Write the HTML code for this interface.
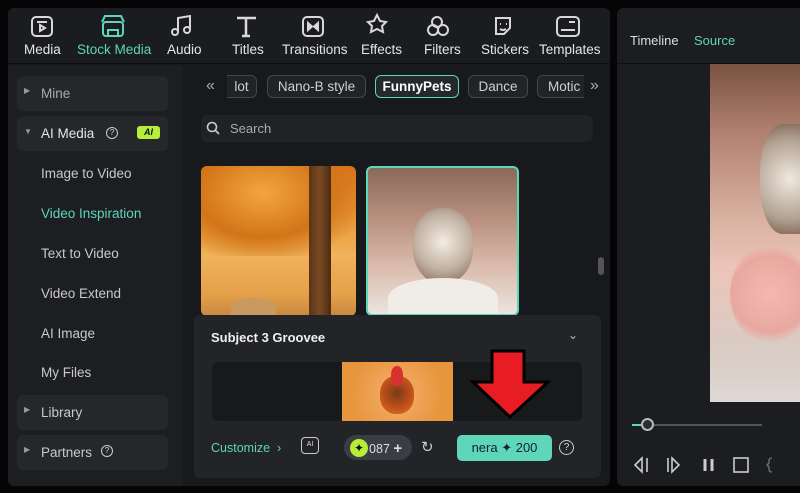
<!DOCTYPE html><html><head><style>
*{margin:0;padding:0;box-sizing:border-box}
body{width:800px;height:493px;background:#050505;font-family:"Liberation Sans",sans-serif;position:relative;overflow:hidden;color:#d8d8d8}
.a{position:absolute}
.tab{position:absolute;top:42px;font-size:13.5px;color:#e6e6e6;text-align:center}
.side{font-size:13.5px;color:#c9c9c9}
.item{position:absolute;left:17px;width:151px;height:35px;background:#25272b;border-radius:6px}
.chip{position:absolute;top:75px;height:23px;border:1px solid #44474c;border-radius:6px;font-size:13.5px;color:#cfcfcf;line-height:21px;text-align:center;background:#212326}
</style></head><body>
<div class="a" style="left:8px;top:8px;width:602px;height:478px;border-radius:6px;background:#17191c"></div>
<div class="a" style="left:8px;top:8px;width:602px;height:56px;background:#1a1c1f;border-bottom:1px solid #0e0f10;border-radius:6px 6px 0 0"></div>
<svg class="a" style="left:0;top:0" width="610" height="64" fill="none" stroke="#d8d8d8" stroke-width="2">
<rect x="32" y="17" width="20" height="19" rx="4"/><path d="M37 22h10M40 25l5 3-5 3z"/>
<g stroke="#5ed6b8"><rect x="103" y="22" width="20" height="14" rx="3"/><path d="M102 22l3-6h16l3 6M108 36v-6h10v6"/></g>
<path d="M178 31V18l12-2v13" /><circle cx="175" cy="32" r="3"/><circle cx="187" cy="30" r="3"/>
<path d="M237 18h19M246 18v18M242 36h8" stroke-width="2.5"/>
<rect x="303" y="17" width="20" height="19" rx="4"/><path d="M308 23l4 3.5-4 3.5zM318 23l-4 3.5 4 3.5z" fill="#d8d8d8"/>
<path d="M377 15l3 6 6 1-4 4 1 6-6-3-6 3 1-6-4-4 6-1z"/>
<circle cx="437" cy="22" r="5"/><circle cx="433" cy="30" r="5"/><circle cx="443" cy="30" r="5"/>
<path d="M496 18h14v10l-6 6h-8z M500 24h1 M506 24h1 M500 29q3 2 6 0"/>
<rect x="557" y="17" width="22" height="19" rx="4"/><path d="M561 30h14M569 22h6"/>
</svg>
<div class="tab" style="left:24px">Media</div>
<div class="tab" style="left:77px;color:#5ed6b8">Stock Media</div>
<div class="tab" style="left:167px">Audio</div>
<div class="tab" style="left:232px">Titles</div>
<div class="tab" style="left:282px">Transitions</div>
<div class="tab" style="left:361px">Effects</div>
<div class="tab" style="left:424px">Filters</div>
<div class="tab" style="left:481px">Stickers</div>
<div class="tab" style="left:539px">Templates</div>
<div class="a" style="left:8px;top:65px;width:175px;height:421px;background:#1c1e21;border-radius:0 0 0 6px"></div>
<div class="item" style="top:76px"></div>
<div class="item" style="top:116px"></div>
<div class="item" style="top:395px"></div>
<div class="item" style="top:435px"></div>
<div class="a side" style="left:24px;top:86px;font-size:8px;color:#999">▶</div>
<div class="a side" style="left:41px;top:86px;color:#aaa">Mine</div>
<div class="a side" style="left:24px;top:127px;font-size:8px;color:#999">▼</div>
<div class="a side" style="left:41px;top:126px;color:#e6e6e6">AI Media</div>
<div class="a" style="left:106px;top:127px;width:12px;height:12px;border:1.3px solid #ccc;border-radius:50%;font-size:8px;text-align:center;line-height:10px">?</div>
<div class="a" style="left:137px;top:126px;width:23px;height:13px;background:#b6ee3a;border-radius:3px;color:#111;font-size:9px;font-weight:bold;font-style:italic;text-align:center;line-height:13px">AI</div>
<div class="a side" style="left:41px;top:166px">Image to Video</div>
<div class="a side" style="left:41px;top:206px;color:#5ed6b8">Video Inspiration</div>
<div class="a side" style="left:41px;top:246px">Text to Video</div>
<div class="a side" style="left:41px;top:286px">Video Extend</div>
<div class="a side" style="left:41px;top:326px">AI Image</div>
<div class="a side" style="left:41px;top:365px">My Files</div>
<div class="a side" style="left:24px;top:405px;font-size:8px;color:#999">▶</div>
<div class="a side" style="left:41px;top:405px">Library</div>
<div class="a side" style="left:24px;top:445px;font-size:8px;color:#999">▶</div>
<div class="a side" style="left:41px;top:445px">Partners</div>
<div class="a" style="left:101px;top:445px;width:12px;height:12px;border:1.3px solid #ccc;border-radius:50%;font-size:8px;text-align:center;line-height:10px">?</div>
<div class="a" style="left:206px;top:77px;font-size:16px;color:#aaa">«</div>
<div class="chip" style="left:227px;width:30px;border-left:none;border-radius:0 6px 6px 0">lot</div>
<div class="chip" style="left:267px;width:99px">Nano-B style</div>
<div class="chip" style="left:375px;width:84px;border:1.5px solid #5ed6b8;color:#fff;font-weight:bold;background:#26292c">FunnyPets</div>
<div class="chip" style="left:468px;width:60px">Dance</div>
<div class="chip" style="left:537px;width:47px;border-right:none;border-radius:6px 0 0 6px;text-align:left;padding-left:10px">Motic</div>
<div class="a" style="left:590px;top:77px;font-size:16px;color:#aaa">»</div>
<div class="a" style="left:201px;top:115px;width:392px;height:27px;background:#202225;border-radius:6px"></div>
<svg class="a" style="left:206px;top:121px" width="14" height="14" fill="none" stroke="#ccc" stroke-width="1.6"><circle cx="6" cy="6" r="4.5"/><path d="M9.5 9.5l3.5 3.5"/></svg>
<div class="a" style="left:230px;top:121px;font-size:13px;color:#aaa">Search</div>
<div class="a" style="left:201px;top:166px;width:155px;height:150px;border-radius:6px;overflow:hidden;background:linear-gradient(180deg,#d8731a 0%,#e89a3a 35%,#f0b25a 60%,#e6a04a 85%,#c78a40 100%)">
<div class="a" style="left:0;top:0;width:155px;height:90px;background:radial-gradient(ellipse at 40% 30%,#f2a540 0%,#d27518 50%,transparent 80%)"></div>
<div class="a" style="left:108px;top:0;width:22px;height:150px;background:linear-gradient(90deg,#5a3418,#7a4a22,#4a2a14)"></div>
<div class="a" style="left:30px;top:132px;width:45px;height:20px;border-radius:50% 50% 0 0;background:#c89a60"></div>
</div>
<div class="a" style="left:366px;top:166px;width:153px;height:150px;border-radius:6px;border:2px solid #5ed6b8;overflow:hidden;background:linear-gradient(180deg,#8a6a5a 0%,#b89080 35%,#d8b8a8 65%,#ece4de 100%)">
<div class="a" style="left:45px;top:40px;width:60px;height:75px;border-radius:45%;background:radial-gradient(circle at 50% 45%,#f4ece4,#c0b0a0 55%,#7a5a4a)"></div>
<div class="a" style="left:20px;top:110px;width:110px;height:40px;border-radius:50% 50% 0 0;background:#f0ece8"></div>
</div>
<div class="a" style="left:598px;top:257px;width:6px;height:18px;background:#555;border-radius:3px"></div>
<div class="a" style="left:194px;top:315px;width:407px;height:163px;background:#222427;border-radius:6px"></div>
<div class="a" style="left:211px;top:330px;font-size:13px;font-weight:bold;color:#f0f0f0">Subject 3 Groovee</div>
<div class="a" style="left:568px;top:328px;font-size:12px;color:#bbb">⌄</div>
<div class="a" style="left:212px;top:362px;width:370px;height:59px;background:#17191b;border-radius:6px"></div>
<div class="a" style="left:342px;top:362px;width:111px;height:59px;background:radial-gradient(circle at 50% 55%,#f7b070,#e8963e 70%)"></div>
<div class="a" style="left:380px;top:376px;width:34px;height:38px;border-radius:45%;background:radial-gradient(circle at 50% 45%,#7a3a1a,#c0501a 55%,#e07a2a)"></div>
<div class="a" style="left:391px;top:366px;width:12px;height:20px;border-radius:45%;background:#d83030"></div>
<div class="a" style="left:211px;top:441px;font-size:12.5px;color:#5ed6b8">Customize &nbsp;›</div>
<div class="a" style="left:301px;top:437px;width:18px;height:17px;border:1.5px solid #ccc;border-radius:4px;font-size:7px;text-align:center;line-height:13px;color:#ddd">AI</div>
<div class="a" style="left:344px;top:435px;width:68px;height:25px;background:#3a3e44;border-radius:13px"></div>
<div class="a" style="left:350px;top:439px;width:18px;height:18px;background:#b6ee3a;border-radius:50%;color:#111;font-size:12px;text-align:center;line-height:18px">✦</div>
<div class="a" style="left:369px;top:440px;font-size:12.5px;color:#ddd">087 <b style="font-size:15px">+</b></div>
<div class="a" style="left:421px;top:438px;font-size:15px;color:#ccc">↻</div>
<div class="a" style="left:457px;top:435px;width:95px;height:26px;background:#5ed6b8;border-radius:5px;color:#123;font-size:13px;text-align:center;line-height:26px">nera ✦ 200</div>
<div class="a" style="left:559px;top:440px;width:15px;height:15px;border:1.5px solid #ccc;border-radius:50%;font-size:10px;text-align:center;line-height:13px">?</div>
<svg class="a" style="left:470px;top:348px" width="82" height="72"><path d="M22 3h32v31h24L40 69 3 34h19z" fill="#e81c23" stroke="#000" stroke-width="3"/></svg>
<div class="a" style="left:617px;top:8px;width:190px;height:478px;background:#1b1d20;border-radius:6px"></div>
<div class="a" style="left:617px;top:8px;width:190px;height:56px;border-bottom:1px solid #0e0f10"></div>
<div class="a" style="left:630px;top:33px;font-size:13px;color:#ddd">Timeline</div>
<div class="a" style="left:694px;top:33px;font-size:13px;color:#5ed6b8">Source</div>
<div class="a" style="left:710px;top:64px;width:90px;height:338px;overflow:hidden;background:linear-gradient(180deg,#7a5240 0%,#b08070 20%,#d8b0a0 45%,#ecc4b8 60%,#d8ccc4 85%,#e0d8d4 100%)">
<div class="a" style="left:50px;top:60px;width:50px;height:110px;border-radius:45% 0 0 45%;background:radial-gradient(circle at 60% 50%,#f0e8e0,#b0a090 65%,#7a5a4a)"></div>
<div class="a" style="left:20px;top:180px;width:80px;height:100px;border-radius:50%;background:radial-gradient(circle,#f4b8b0,#e8a8a0 60%,transparent 75%)"></div>
</div>
<div class="a" style="left:636px;top:424px;width:126px;height:2px;background:#555"></div>
<div class="a" style="left:632px;top:424px;width:12px;height:2px;background:#5ed6b8"></div>
<div class="a" style="left:641px;top:418px;width:13px;height:13px;border:2px solid #bbb;border-radius:50%;background:#2a2c2f"></div>
<svg class="a" style="left:632px;top:455px" width="168" height="20" fill="none" stroke="#ccc" stroke-width="1.6"><path d="M10 3L3 10l7 7zM15 3v14M36 3v14M40 3l7 7-7 7z"/><path d="M73 4v12M80 4v12" stroke-width="3"/><rect x="102" y="3" width="14" height="14"/><path d="M140 3q-3 0-3 3v2l-2 2 2 2v2q0 3 3 3" stroke="#666"/></svg>
</body></html>
